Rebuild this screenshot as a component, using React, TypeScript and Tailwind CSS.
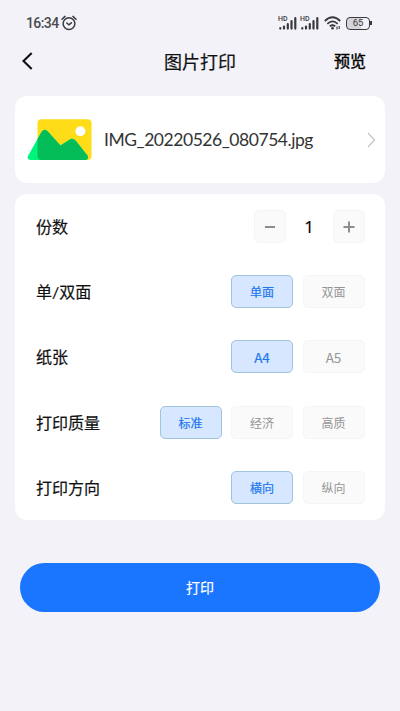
import React, { useState } from "react";
import clsx from "clsx";

interface OptionRow {
  label: string;
  options: string[];
}

const rows: OptionRow[] = [
  { label: "单/双面", options: ["单面", "双面"] },
  { label: "纸张", options: ["A4", "A5"] },
  { label: "打印质量", options: ["标准", "经济", "高质"] },
  { label: "打印方向", options: ["横向", "纵向"] },
];

const Signal: React.FC = () => (
  <div className="relative h-[14px] w-[20px]">
    <span className="absolute -top-px left-0 font-['Roboto'] text-[7px] leading-[8px] font-medium text-[#3a3a3e]">HD</span>
    <svg className="h-[14px] w-[20px]" viewBox="0 0 20 14" stroke="#3a3a3e" strokeWidth="2.2" strokeLinecap="round">
      <path d="M2.3 12.2v.4M6 10.6v2M9.8 8v4.6M13.5 5.2v7.4M17.3 2.2v10.4" />
    </svg>
  </div>
);

const StatusBar: React.FC = () => (
  <div className="flex h-[46px] items-center pr-[28px] pl-[26px]">
    <span className="font-['Roboto'] text-[14px] font-medium tracking-[-0.6px] text-[#4a4a4e]">16:34</span>
    <svg className="ml-[2px] size-[16px]" viewBox="0 0 16 16" fill="none" stroke="#3a3a3e" strokeWidth="1.5" strokeLinecap="round">
      <circle cx="8" cy="8.6" r="5.9" />
      <path d="M1 4.2 4 1.4M15 4.2 12 1.4M5.8 8l2.1 1.8L10.4 7.8" />
    </svg>
    <div className="ml-auto flex items-center">
      <Signal />
      <span className="w-[2px]" />
      <Signal />
      <svg className="ml-[4px] h-[14px] w-[18px]" viewBox="0 0 18 14" fill="none" stroke="#3a3a3e" strokeWidth="1.8">
        <path d="M.8 5Q8.5-2.4 16.2 5M3.3 7.8Q8.5 3 13.7 7.8M5.8 10.4Q8.5 8 11.2 10.4" />
        <circle cx="8.5" cy="12.2" r="1.3" fill="#3a3a3e" stroke="none" />
        <path d="M13 10.4v3M15.2 10v3" strokeWidth="1.1" />
      </svg>
      <div className="ml-[4px] flex h-[13px] w-[24px] items-center justify-center rounded-[4px] border-[1.5px] border-[#3a3a3e] bg-linear-to-r from-[#d4d4da] from-65% to-transparent to-65% font-['Roboto'] text-[9.5px] leading-none text-[#3a3a3e]">
        65
      </div>
      <span className="h-[4px] w-[2px] bg-[#3a3a3e]" />
    </div>
  </div>
);

const Stepper: React.FC = () => {
  const [count, setCount] = useState(1);
  const button = "flex h-[33px] w-[32px] items-center justify-center rounded-[5px] border border-[#f4f4f4] bg-[#fafafa]";
  return (
    <div className="flex items-center">
      <button className={button} onClick={() => setCount(Math.max(1, count - 1))}>
        <span className="h-[2px] w-[10px] bg-[#8c8c8c]" />
      </button>
      <span className="w-[47px] text-center font-['Open_Sans'] text-[17px] font-medium text-black [-webkit-text-stroke:0.2px]">{count}</span>
      <button className={button} onClick={() => setCount(count + 1)}>
        <svg className="size-[12px]" viewBox="0 0 12 12" stroke="#8c8c8c" strokeWidth="2">
          <path d="M6 .5v11M.5 6h11" />
        </svg>
      </button>
    </div>
  );
};

const Options: React.FC<{ options: string[] }> = ({ options }) => {
  const [selected, setSelected] = useState(options[0]);
  return (
    <div className="flex gap-[9.5px]">
      {options.map((option) => (
        <button
          key={option}
          onClick={() => setSelected(option)}
          className={clsx(
            "h-[33px] w-[62px] rounded-[5px] border pt-px font-['Noto_Sans_CJK_SC']",
            /^[A-Z]/.test(option) ? "pb-px text-[13.5px]" : "text-[12px]",
            option === selected
              ? "border-[#9fc4dc] bg-[#d6e7ff] text-[#1f78ee] [-webkit-text-stroke:0.2px]"
              : "border-[#f5f5f5] bg-[#fafafa] text-[#959595]"
          )}
        >
          {option}
        </button>
      ))}
    </div>
  );
};

export default function App() {
  return (
    <div className="h-[711px] w-[400px] overflow-hidden bg-[#f2f2f8] font-['Lato','Noto_Sans_CJK_SC',sans-serif]">
      <StatusBar />

      <header className="grid h-[30px] grid-cols-3 items-center pr-[34px] pl-[22px]">
        <svg className="h-[18px] w-[11px]" viewBox="0 0 11 18" fill="none" stroke="#111" strokeWidth="2.1">
          <path d="M9.7 1 1.5 9l8.2 8" />
        </svg>
        <h1 className="justify-self-center pt-px pl-[12px] text-[18px] leading-none text-[#111] [-webkit-text-stroke:0.2px]">图片打印</h1>
        <button className="justify-self-end text-[16px] leading-none text-black [-webkit-text-stroke:0.4px]">预览</button>
      </header>

      <main className="px-[15px] pt-[20px]">
        <section className="flex h-[87px] items-center rounded-[12px] bg-white pr-[9px] pl-[12px]">
          <svg className="h-[42px] w-[66px]" viewBox="0 0 66 42">
            <rect x="10.5" y=".3" width="54" height="40.7" rx="4" fill="#ffdc18" />
            <path d="M3.3 41Q-.8 40.5 1.2 36.5L14.8 12.5Q17.8 9 20.8 12.5L33.5 26.5 42 21Q45.5 18.5 48.5 21.5L60.5 36.5Q62 40.5 58.5 41z" fill="#00f57c" />
            <path d="M14.5 41Q10.5 40.7 10.5 37V19.9L14.8 12.5Q17.8 9 20.8 12.5L33.5 26.5 42 21Q45.5 18.5 48.5 21.5L60.5 36.5Q62 40.5 58.5 41z" fill="#04bd58" />
            <circle cx="53.4" cy="12.3" r="5" fill="#fff" />
          </svg>
          <span className="ml-[11px] pt-[2px] text-[17.5px] tracking-[-0.45px] text-[#333]">IMG_20220526_080754.jpg</span>
          <svg className="ml-auto h-[16px] w-[9px]" viewBox="0 0 9 16" fill="none" stroke="#c4c4c4" strokeWidth="1.2">
            <path d="M1 1l6.5 7L1 15" />
          </svg>
        </section>

        <section className="mt-[11px] grid h-[326px] grid-rows-5 rounded-[12px] bg-white pr-[20.5px] pl-[21px]">
          <div className="flex items-center justify-between">
            <span className="pt-px text-[16px] text-[#111] [-webkit-text-stroke:0.2px]">份数</span>
            <Stepper />
          </div>
          {rows.map((row) => (
            <div key={row.label} className="flex items-center justify-between">
              <span className="pt-px text-[16px] text-[#111] [-webkit-text-stroke:0.2px]">{row.label}</span>
              <Options options={row.options} />
            </div>
          ))}
        </section>

        <button className="mt-[43px] ml-[5px] h-[49px] w-[360px] rounded-full bg-[#1a75ff] text-[14px] text-white [-webkit-text-stroke:0.2px]">
          打印
        </button>
      </main>
    </div>
  );
}
